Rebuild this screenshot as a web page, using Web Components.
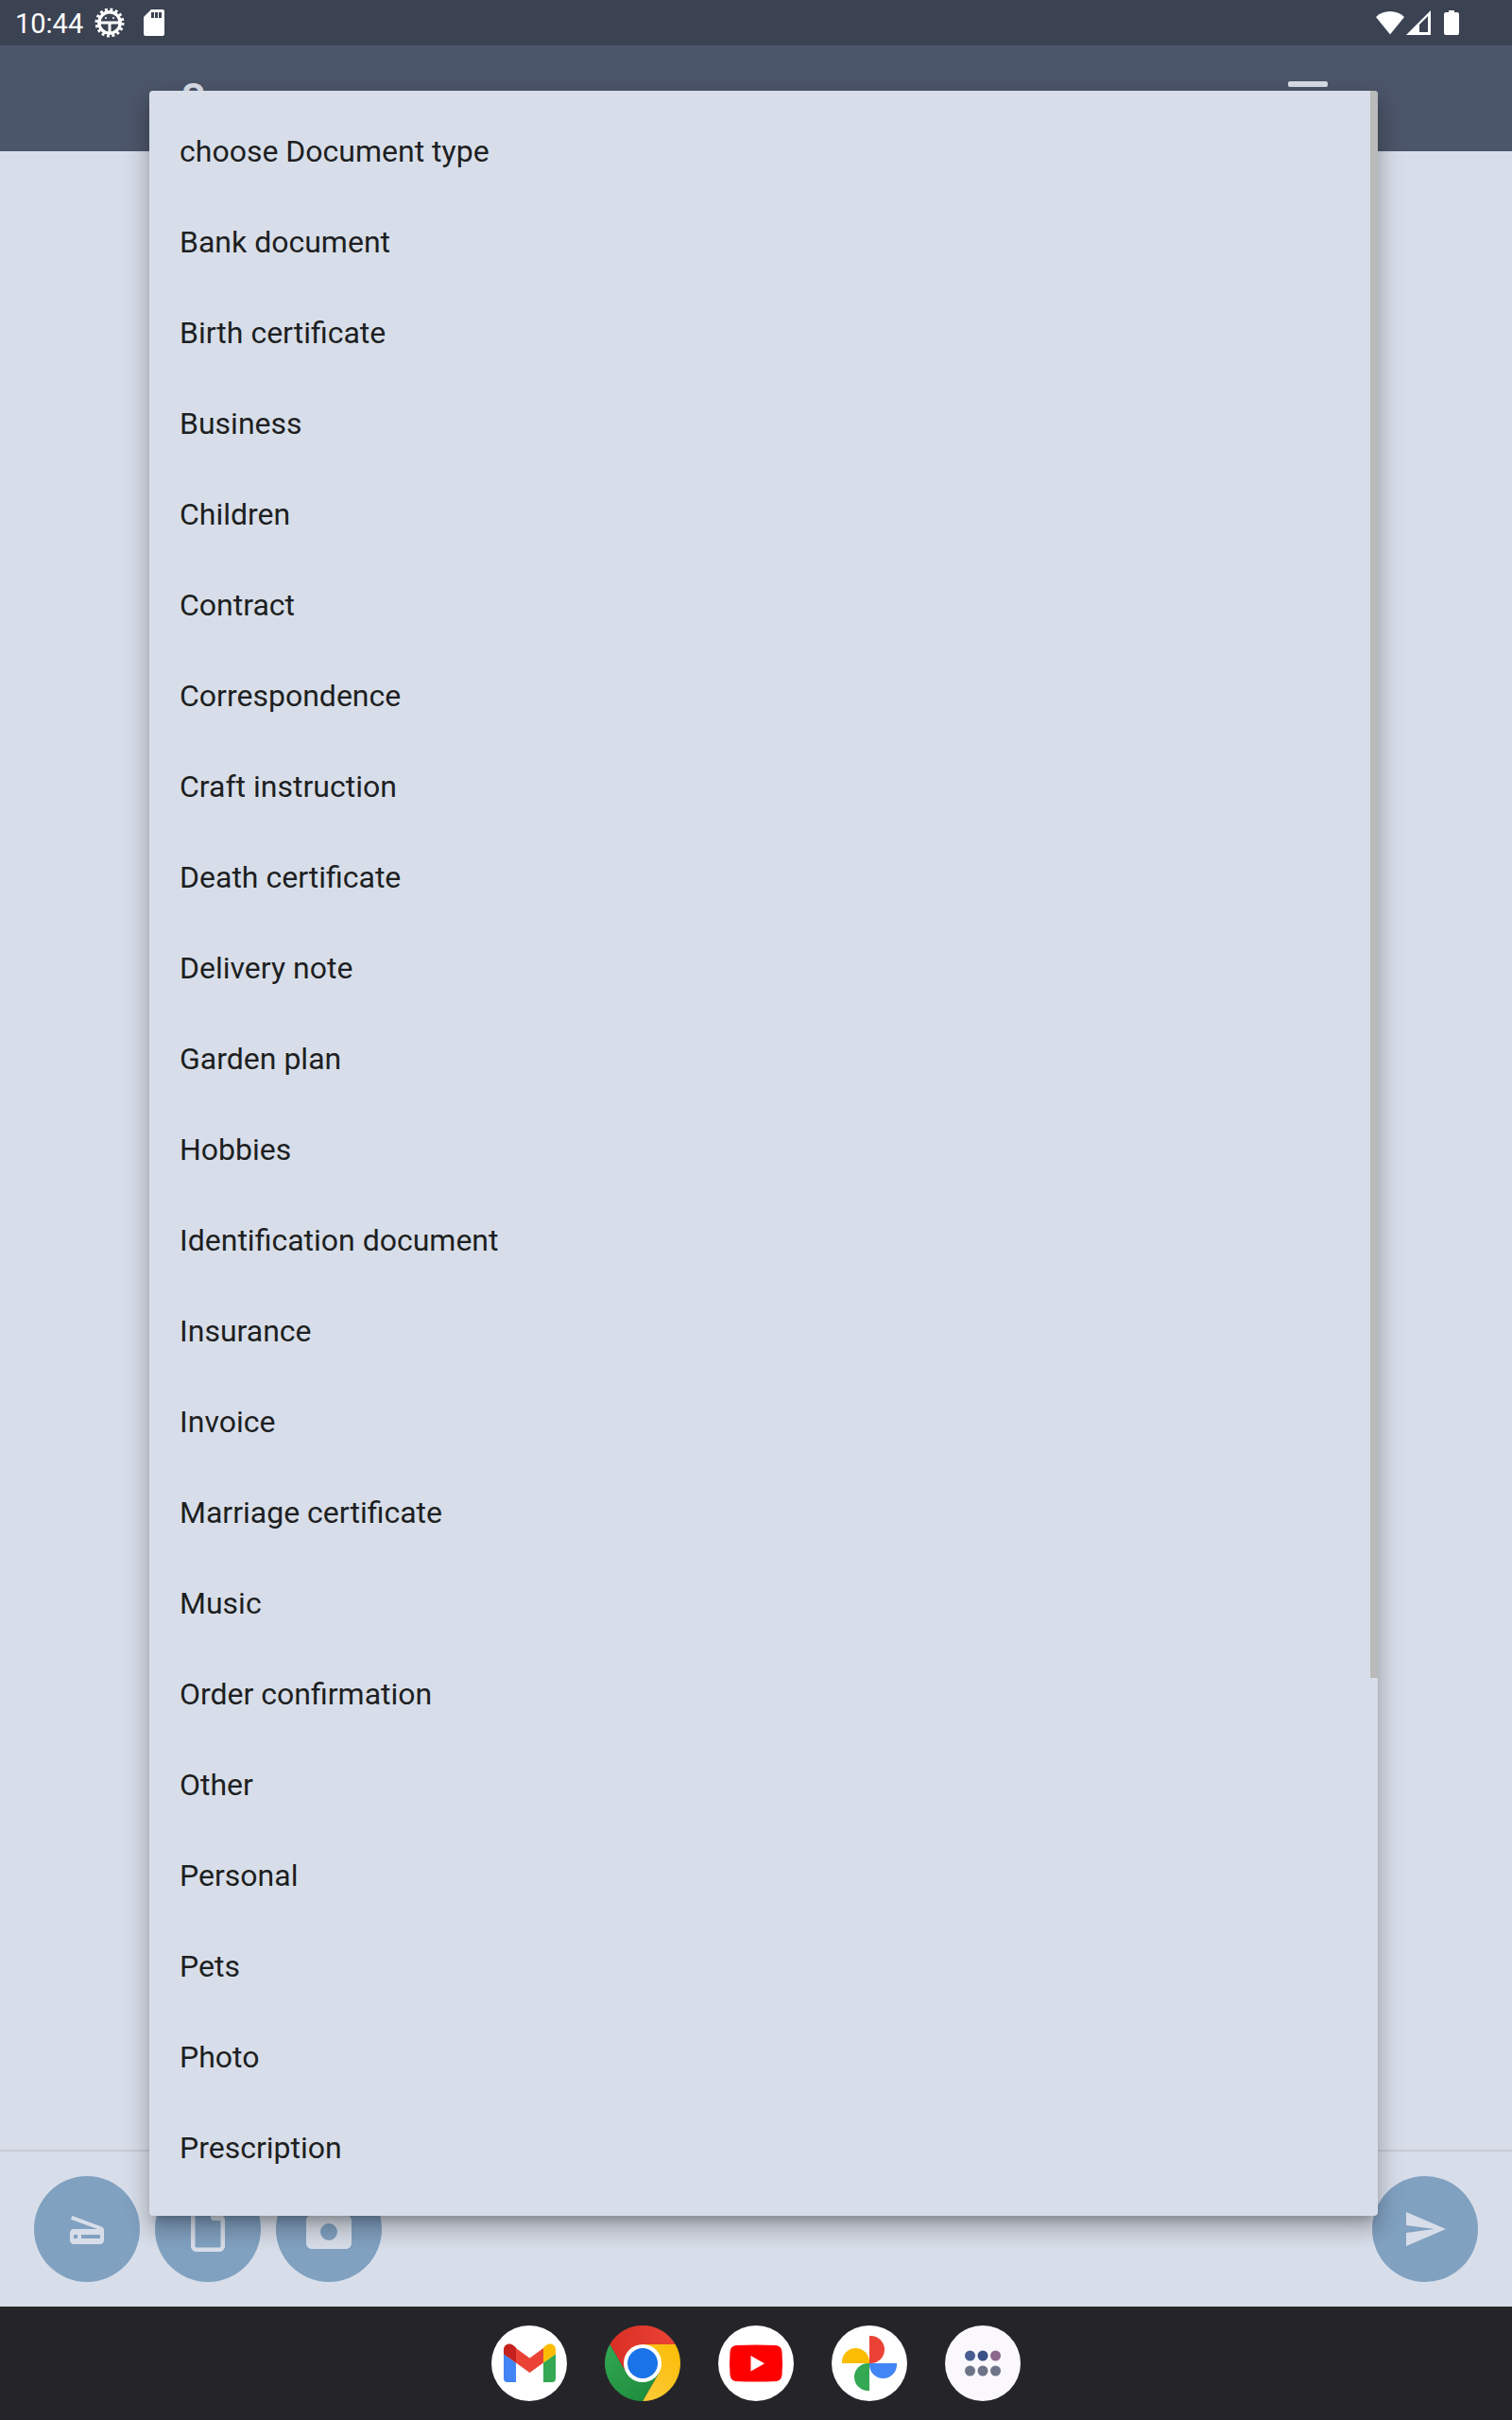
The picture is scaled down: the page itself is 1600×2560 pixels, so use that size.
<!DOCTYPE html>
<html lang="en">
<head>
<meta charset="utf-8">
<meta name="viewport" content="width=device-width, initial-scale=1">
<title>Choose document type</title>
<style>
html, body { margin: 0; height: 100%; }
body { font-family: Roboto, "Liberation Sans", sans-serif; background: #d8dee9; color: #1d1f22; }
</style>
</head>
<body>
<doc-app></doc-app>
<script>
const define = (name, html) => {
  const template = document.createElement('template');
  template.innerHTML = html;
  customElements.define(name, class extends HTMLElement {
    constructor() {
      super();
      this.attachShadow({ mode: 'open' }).append(template.content.cloneNode(true));
    }
  });
};

define('status-bar', `
<style>
:host { display: flex; align-items: center; justify-content: space-between; height: 48px; padding: 0 56px 0 16px; box-sizing: border-box; background: #3b4252; color: #fff; }
.side { display: flex; align-items: center; }
time { font-size: 29px; line-height: 46px; padding-top: 2px; margin-right: 12px; }
svg { display: block; fill: #fff; }
.card { margin-left: 20px; }
.battery { margin-left: 14px; }
.signal { margin-left: 2px; }
</style>
<div class="side">
  <time>10:44</time>
  <svg width="32" height="32" viewBox="0 0 32 32" aria-hidden="true">
    <circle cx="16" cy="16" r="14" fill="none" stroke="#fff" stroke-width="3" stroke-dasharray="2.9 2.6"/>
    <circle cx="16" cy="16" r="11.200" fill="none" stroke="#fff" stroke-width="3.400"/>
    <path d="M5 14.500h22v3H5zM14.500 16h3v11h-3z"/>
    <circle cx="12" cy="11" r="1"/><circle cx="20" cy="11" r="1"/>
  </svg>
  <svg class="card" width="22" height="28" viewBox="0 0 22 28" aria-hidden="true">
    <path fill-rule="evenodd" d="M8 0h12a2 2 0 0 1 2 2v24a2 2 0 0 1-2 2H2a2 2 0 0 1-2-2V8zM8 3v6h3V3zM12 3v6h3V3zM16 3v6h3V3z"/>
  </svg>
</div>
<div class="side">
  <svg width="30" height="26" viewBox="0 0 30 26" aria-hidden="true"><path d="M15 25.500 0 7a22 22 0 0 1 30 0z"/></svg>
  <svg class="signal" width="26" height="26" viewBox="0 0 26 26" aria-hidden="true"><path fill-rule="evenodd" d="M0 26 26 0v26zM14 15v8h9V6z"/></svg>
  <svg class="battery" width="16" height="26" viewBox="0 0 16 26" aria-hidden="true"><path d="M5 0h6v2h3a2 2 0 0 1 2 2v20a2 2 0 0 1-2 2H2a2 2 0 0 1-2-2V4a2 2 0 0 1 2-2h3z"/></svg>
</div>`);

define('app-header', `
<style>
:host { display: flex; align-items: center; justify-content: space-between; height: 112px; padding: 0 192px; box-sizing: border-box; background: #4c566a; color: #d8dee9; }
h1 { margin: 0; font-size: 40px; line-height: 48px; font-weight: 700; }
button { border: 0; padding: 0; background: none; color: inherit; display: flex; }
</style>
<h1>S</h1>
<button type="button" aria-label="Menu"><svg width="48" height="48" viewBox="0 0 48 48" fill="currentColor"><rect x="3" y="6" width="42" height="6" rx="2"/><rect x="3" y="21" width="42" height="6" rx="2"/><rect x="3" y="36" width="42" height="6" rx="2"/></svg></button>`);

define('round-button', `
<style>
:host { display: block; }
button { display: flex; align-items: center; justify-content: center; width: 112px; height: 112px; padding: 0; border: 0; border-radius: 50%; background: #81a1c1; color: #d8dee9; }
::slotted(svg) { display: block; height: 48px; fill: currentColor; }
</style>
<button type="button"><slot></slot></button>`);

define('action-bar', `
<style>
:host { display: flex; justify-content: space-between; padding: 26px 36px; border-top: 2px solid #c5cad5; }
.group { display: flex; gap: 16px; }
</style>
<div class="group">
  <round-button><svg viewBox="0 0 24 24" width="48" role="img" aria-label="Scan"><path d="M19.800 10.700 4.200 5l-.7 1.900L17.600 12H5c-1.100 0-2 .9-2 2v4c0 1.100.9 2 2 2h14c1.100 0 2-.9 2-2v-5.500c0-.8-.5-1.600-1.200-1.800zM7 17H5v-2h2v2zm12 0H9v-2h10v2z"/></svg></round-button>
  <round-button><svg viewBox="0 0 384 512" width="36" role="img" aria-label="File"><path d="M320 464c8.800 0 16-7.200 16-16V160H256c-17.700 0-32-14.300-32-32V48H64c-8.800 0-16 7.200-16 16v384c0 8.800 7.200 16 16 16H320zM0 64C0 28.700 28.700 0 64 0H229.500c17 0 33.300 6.700 45.300 18.700l90.500 90.500c12 12 18.700 28.300 18.700 45.300V448c0 35.300-28.700 64-64 64H64c-35.300 0-64-28.700-64-64V64z"/></svg></round-button>
  <round-button><svg viewBox="0 0 512 512" width="48" role="img" aria-label="Camera"><path d="M149.100 64.800 138.700 96H64C28.700 96 0 124.700 0 160V416c0 35.300 28.700 64 64 64H448c35.300 0 64-28.700 64-64V160c0-35.300-28.700-64-64-64H373.300L362.900 64.800C356.400 45.200 338.100 32 317.400 32H194.600c-20.700 0-39 13.200-45.500 32.800zM256 192a96 96 0 1 1 0 192 96 96 0 1 1 0-192z"/></svg></round-button>
</div>
<round-button><svg viewBox="0 0 24 24" width="48" role="img" aria-label="Send"><path d="M2.010 21 23 12 2.010 3 2 10l15 2-15 2z"/></svg></round-button>`);

define('task-bar', `
<style>
:host { display: flex; justify-content: center; gap: 40px; padding: 20px 0; background: #252529; }
button { display: block; padding: 0; border: 0; border-radius: 50%; background: none; width: 80px; height: 80px; }
svg { display: block; }
</style>
<button type="button" aria-label="Gmail"><svg width="80" height="80" viewBox="0 0 80 80">
  <circle cx="40" cy="40" r="40" fill="#fff"/>
  <path fill="#4285f4" d="M13 30 26 39.500V60H17a4 4 0 0 1-4-4z"/>
  <path fill="#34a853" d="M68 30 55 39.500V60h9a4 4 0 0 0 4-4z"/>
  <path fill="#ea4335" d="M26 24 40.500 34.500 55 24v15.500L40.500 50 26 39.500z"/>
  <path fill="#c5221f" d="M13 25.500c0-5.500 6-8 10.500-4.200L26 23.500v16L13 30.300z"/>
  <path fill="#fbbc04" d="M68 25.500c0-5.500-6-8-10.500-4.200L55 23.500v16l13-9.200z"/>
</svg></button>
<button type="button" aria-label="Chrome"><svg width="80" height="80" viewBox="0 0 80 80">
  <defs>
    <linearGradient id="r"><stop stop-color="#d93025"/><stop offset="1" stop-color="#ea4335"/></linearGradient>
    <linearGradient id="y" x1="1" y1="0" x2="0.300" y2="1"><stop stop-color="#fbbc04"/><stop offset="1" stop-color="#fcc934"/></linearGradient>
    <linearGradient id="g" x1="0" y1="0" x2="0.700" y2="1"><stop stop-color="#34a853"/><stop offset="1" stop-color="#1e8e3e"/></linearGradient>
  </defs>
  <path fill="url(#r)" d="M5.360 20A40 40 0 0 1 74.640 20H40L22.680 50z"/>
  <path fill="url(#y)" d="M74.640 20A40 40 0 0 1 40 80L57.320 50 40 20z"/>
  <path fill="url(#g)" d="M40 80A40 40 0 0 1 5.360 20L22.680 50h34.640z"/>
  <circle cx="40" cy="40" r="20" fill="#fff"/><circle cx="40" cy="40" r="16" fill="#1a73e8"/>
</svg></button>
<button type="button" aria-label="YouTube"><svg width="80" height="80" viewBox="0 0 80 80">
  <circle cx="40" cy="40" r="40" fill="#fff"/>
  <path fill="#f00" d="M19 21q21-1.200 42 0 6 .5 6.500 7 1 12 0 24-.5 6.500-6.500 7-21 1.200-42 0-6-.5-6.500-7-1-12 0-24 .5-6.500 6.500-7z"/>
  <path fill="#fff" d="M34.500 32v16.500L49 40.200z"/>
</svg></button>
<button type="button" aria-label="Photos"><svg width="80" height="80" viewBox="0 0 80 80">
  <circle cx="40" cy="40" r="40" fill="#fff"/>
  <path fill="#ea4335" d="M40 40V11a14.500 14.500 0 0 1 1.500 0 14.500 14.500 0 0 1 0 29z"/>
  <path fill="#4285f4" d="M40 40h29v1.500a14.500 14.500 0 0 1-29 0z"/>
  <path fill="#34a853" d="M40 40v29h-1.500a14.500 14.500 0 0 1 0-29z"/>
  <path fill="#fbbc04" d="M40 40H11v-1.500a14.500 14.500 0 0 1 29 0z"/>
</svg></button>
<button type="button" aria-label="All apps"><svg width="80" height="80" viewBox="0 0 80 80">
  <circle cx="40" cy="40" r="40" fill="#faf8fd"/>
  <circle cx="26.500" cy="32" r="5.500" fill="#495d92"/><circle cx="40" cy="32" r="5.500" fill="#3c5088"/><circle cx="53.500" cy="32" r="5.500" fill="#8c698c"/>
  <g fill="#6e7488"><circle cx="26.500" cy="48" r="5.500"/><circle cx="40" cy="48" r="5.500"/><circle cx="53.500" cy="48" r="5.500"/></g>
</svg></button>`);

define('menu-option', `
<style>
:host { display: block; }
button { display: flex; align-items: center; width: 100%; height: 96px; padding: 0 32px; border: 0; background: none; color: inherit; font: inherit; font-size: 32px; line-height: 48px; text-align: left; }
</style>
<button type="button"><slot></slot></button>`);

define('option-menu', `
<style>
:host { display: flex; box-sizing: border-box; overflow: hidden; border-radius: 4px; background: #d8dee9; box-shadow: 0 10px 10px -6px rgba(0,0,0,.2), 0 16px 20px 2px rgba(0,0,0,.14), 0 6px 28px 4px rgba(0,0,0,.12); }
.list { flex: 1; padding: 16px 0; overflow: hidden; }
.thumb { width: 8px; height: 74.700%; background: #bababa; }
</style>
<div class="list"><slot></slot></div>
<div class="thumb"></div>`);

define('doc-app', `
<style>
:host { display: grid; grid-template-rows: auto auto 1fr auto auto; min-height: 100%; position: relative; }
option-menu { position: absolute; inset: 96px 142px 216px 158px; }
</style>
<status-bar></status-bar>
<app-header></app-header>
<main></main>
<action-bar></action-bar>
<task-bar></task-bar>
<option-menu>
  ${['choose Document type', 'Bank document', 'Birth certificate', 'Business', 'Children', 'Contract', 'Correspondence', 'Craft instruction', 'Death certificate', 'Delivery note', 'Garden plan', 'Hobbies', 'Identification document', 'Insurance', 'Invoice', 'Marriage certificate', 'Music', 'Order confirmation', 'Other', 'Personal', 'Pets', 'Photo', 'Prescription'].map(t => `<menu-option>${t}</menu-option>`).join('')}
</option-menu>`);
</script>
</body>
</html>
